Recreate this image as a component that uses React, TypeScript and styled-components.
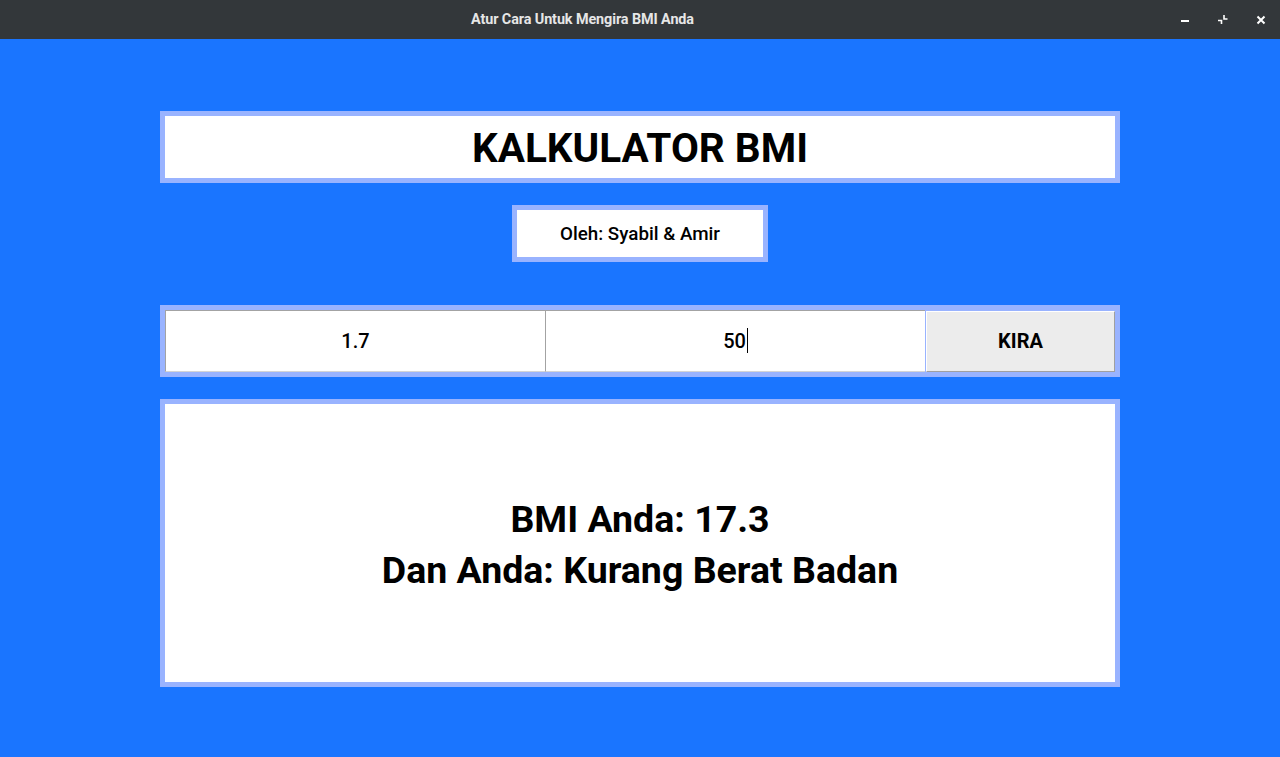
import React from "react";
import styled, { createGlobalStyle } from "styled-components";

const Global = createGlobalStyle`
  html, body { margin: 0; padding: 0; }
  body {
    background: #1a75ff;
    font-family: Roboto, "Noto Sans", "Liberation Sans", sans-serif;
    width: 1280px;
    height: 757px;
    overflow: hidden;
  }
`;

const Window = styled.div`
  display: flex;
  flex-direction: column;
  width: 1280px;
  height: 757px;
  background: #1a75ff;
`;

const TitleBar = styled.div`
  position: relative;
  height: 39px;
  flex: none;
  background: #33373a;
  display: flex;
  align-items: center;
  justify-content: center;
`;

const TitleText = styled.div`
  color: #e6e6e6;
  font-weight: 700;
  font-size: 14.4px;
  margin-right: 115px;
  letter-spacing: -0.1px;
`;

const WinButtons = styled.div`
  position: absolute;
  right: 0;
  top: 0;
  height: 39px;
  display: flex;
  align-items: center;
`;

const WinButton = styled.div`
  width: 38px;
  height: 39px;
  display: flex;
  align-items: center;
  justify-content: center;
`;

const Content = styled.div`
  width: 960px;
  margin: 72px auto 0;
  display: flex;
  flex-direction: column;
  align-items: center;
`;

const Panel = styled.div<{ $w?: number; $h: number; $mt?: number }>`
  box-sizing: border-box;
  width: ${(p) => (p.$w ? `${p.$w}px` : "100%")};
  height: ${(p) => p.$h}px;
  margin-top: ${(p) => p.$mt ?? 0}px;
  border: 5px solid #99b3ff;
  background: #ffffff;
  display: flex;
  flex-direction: column;
  align-items: center;
  justify-content: center;
  color: #000;
`;

const Heading = styled.h1`
  margin: 0;
  font-size: 40.5px;
  font-weight: 700;
  line-height: 1;
  margin-top: 2px;
`;

const Byline = styled.div`
  font-size: 18.8px;
  font-weight: 500;
`;

const InputRow = styled.div`
  box-sizing: border-box;
  width: 100%;
  height: 72px;
  margin-top: 43px;
  border: 5px solid #99b3ff;
  background: #99b3ff;
  display: grid;
  grid-template-columns: 380px 380px 1fr;
`;

const Field = styled.div`
  box-sizing: border-box;
  background: #fff;
  border-top: 1px solid #a3a3a3;
  border-left: 1px solid #a3a3a3;
  border-bottom: 1px solid #d4d4d4;
  display: flex;
  align-items: center;
  justify-content: center;
  font-size: 20px;
  font-weight: 500;
  color: #000;
  padding-bottom: 1px;
`;

const Caret = styled.span`
  display: inline-block;
  width: 1px;
  height: 25px;
  background: #000;
  margin-left: 1px;
  vertical-align: middle;
`;

const CalcButton = styled.button`
  box-sizing: border-box;
  margin: 1px 0 0 1px;
  background: #ececec;
  border: none;
  border-top: 1px solid #ffffff;
  border-left: 1px solid #ffffff;
  border-right: 1px solid #a0a0a0;
  border-bottom: 1px solid #a0a0a0;
  font-family: inherit;
  font-size: 20px;
  font-weight: 700;
  color: #000;
  padding: 0 0 2px;
`;

const ResultLine = styled.div`
  font-size: 37.5px;
  font-weight: 700;
  line-height: 51px;
`;

const Result = styled(Panel)`
  padding-top: 4px;
`;

export default function App() {
  return (
    <>
      <Global />
      <Window>
        <TitleBar>
          <TitleText>Atur Cara Untuk Mengira BMI Anda</TitleText>
          <WinButtons>
            <WinButton>
              <svg width="10" height="10" viewBox="0 0 10 10">
                <rect x="1" y="5" width="8" height="2" fill="#ffffff" />
              </svg>
            </WinButton>
            <WinButton>
              <svg width="12" height="12" viewBox="0 0 12 12">
                <path d="M1 6.5h3.5V10" stroke="#ffffff" strokeWidth="1.6" fill="none" />
                <path d="M7 1v4h3.5" stroke="#ffffff" strokeWidth="1.6" fill="none" />
              </svg>
            </WinButton>
            <WinButton>
              <svg width="10" height="10" viewBox="0 0 10 10">
                <path d="M1.5 1.5l7 7M8.5 1.5l-7 7" stroke="#ffffff" strokeWidth="2" />
              </svg>
            </WinButton>
          </WinButtons>
        </TitleBar>
        <Content>
          <Panel $h={72}>
            <Heading>KALKULATOR BMI</Heading>
          </Panel>
          <Panel $w={256} $h={57} $mt={22}>
            <Byline>Oleh: Syabil &amp; Amir</Byline>
          </Panel>
          <InputRow>
            <Field>1.7</Field>
            <Field>
              <span>50</span>
              <Caret />
            </Field>
            <CalcButton>KIRA</CalcButton>
          </InputRow>
          <Result $h={288} $mt={22}>
            <ResultLine>BMI Anda: 17.3</ResultLine>
            <ResultLine>Dan Anda: Kurang Berat Badan</ResultLine>
          </Result>
        </Content>
      </Window>
    </>
  );
}
